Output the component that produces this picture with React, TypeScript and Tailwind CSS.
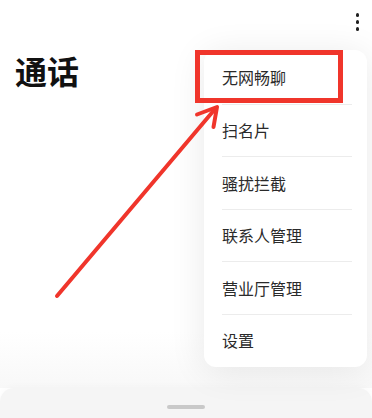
const menuItems = ['无网畅聊', '扫名片', '骚扰拦截', '联系人管理', '营业厅管理', '设置']

function MoreDots() {
  return (
    <div className="flex flex-col items-center gap-[3.5px]">
      <span className="w-[3.5px] h-[3.5px] rounded-full bg-[#1f1f1f]" />
      <span className="w-[3.5px] h-[3.5px] rounded-full bg-[#1f1f1f]" />
      <span className="w-[3.5px] h-[3.5px] rounded-full bg-[#1f1f1f]" />
    </div>
  )
}

function PopupMenu() {
  return (
    <div className="absolute left-[204px] top-[50px] w-[163px] py-px bg-white rounded-[12px] shadow-[0_4px_36px_rgba(0,0,0,0.09)]">
      {menuItems.map((label, i) => (
        <div key={label} className="h-[52.5px] px-[18px] pr-[15px]">
          <div
            className={`h-full flex items-center text-[16px] text-[#2a2a2a] ${
              i > 0 ? 'border-t border-[#ececec]' : ''
            }`}
          >
            {label}
          </div>
        </div>
      ))}
    </div>
  )
}

// red annotation arrow pointing at the first item
function Arrow() {
  return (
    <svg
      className="absolute inset-0 pointer-events-none"
      width="372"
      height="418"
      viewBox="0 0 372 418"
    >
      <g stroke="#f0352b" strokeWidth="4" strokeLinecap="round" strokeLinejoin="round" fill="none">
        <line x1="57" y1="296" x2="215" y2="109" />
        <polyline points="197,114.5 217,107 213.5,127" />
      </g>
    </svg>
  )
}

export default function App() {
  return (
    <div
      className="relative w-[372px] h-[418px] overflow-hidden bg-white"
      style={{ fontFamily: '"Noto Sans CJK SC", "Noto Sans", sans-serif' }}
    >
      <div className="flex flex-col h-full">
        <div className="flex justify-end pt-[13px] pr-[13px] h-[44px]">
          <MoreDots />
        </div>
        <h1 className="ml-[15px] mt-[8px] text-[32px] leading-[36px] font-bold text-[#111]">通话</h1>
        <div className="flex-1" />
        <div className="h-[56px] bg-gradient-to-b from-white to-[#f8f8f8]" />
        <div className="h-[30px] bg-[#f5f5f5] rounded-t-[14px] flex justify-center pt-[17px] shadow-[0_-2px_6px_rgba(0,0,0,0.02)]">
          <span className="w-[38px] h-[4px] rounded-full bg-[#c9c9c9]" />
        </div>
      </div>

      <PopupMenu />

      {/* highlight box */}
      <div className="absolute left-[195px] top-[50px] w-[148px] h-[53px] border-[5px] border-[#f0352b]" />

      <Arrow />
    </div>
  )
}
